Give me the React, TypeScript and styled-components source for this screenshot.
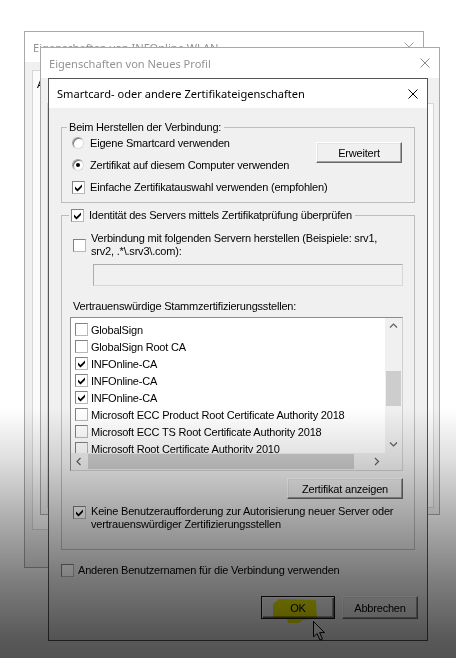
import React from "react";
import styled, { createGlobalStyle, css } from "styled-components";

const GlobalStyle = createGlobalStyle`
  html, body { margin: 0; padding: 0; background: #fff; }
  body {
    font-family: "Liberation Sans", Arial, sans-serif;
    font-size: 11px;
    letter-spacing: -0.2px;
    color: #000;
  }
`;

const Desktop = styled.div`
  position: relative;
  width: 456px;
  height: 658px;
  overflow: hidden;
  background: #fff;
`;

const Window = styled.div<{ $x: number; $y: number; $w: number; $h: number; $active?: boolean }>`
  position: absolute;
  left: ${(p) => p.$x}px;
  top: ${(p) => p.$y}px;
  width: ${(p) => p.$w}px;
  height: ${(p) => p.$h}px;
  box-sizing: border-box;
  border: 1px solid ${(p) => (p.$active ? "#555555" : "#a9a9a9")};
  background: #f0f0f0;
  display: flex;
  flex-direction: column;
`;

const TitleBar = styled.div<{ $h: number }>`
  flex: none;
  height: ${(p) => p.$h}px;
  background: #fff;
  display: flex;
  align-items: center;
  justify-content: space-between;
  padding: 0 9px 0 8px;
`;

const TitleText = styled.span<{ $inactive?: boolean }>`
  font-family: "Noto Sans", "Open Sans", sans-serif;
  font-size: 11.1px;
  letter-spacing: 0;
  white-space: nowrap;
  color: ${(p) => (p.$inactive ? "#939393" : "#000")};
`;

const WindowBody = styled.div<{ $pad: string }>`
  flex: 1;
  display: flex;
  flex-direction: column;
  padding: ${(p) => p.$pad};
  min-height: 0;
`;

const TabPanel = styled.div`
  flex: 1;
  background: #fbfbfb;
  border: 1px solid #d6d6d6;
  padding: 7px 4px;
`;

const TabCaption = styled.div`
  line-height: 13px;
`;

const Group = styled.fieldset<{ $mt?: number }>`
  margin: ${(p) => p.$mt ?? 0}px 0 0 0;
  padding: 0;
  border: 1px solid #bcbcbc;
  min-width: 0;
`;

const Legend = styled.legend<{ $ml: number }>`
  margin-left: ${(p) => p.$ml}px;
  padding: 0 3px 0 2px;
  line-height: 13px;
  display: flex;
  align-items: center;
  gap: 5px;
`;

const GroupBody = styled.div<{ $pad: string; $mt?: number }>`
  display: flex;
  flex-direction: column;
  padding: ${(p) => p.$pad};
  margin-top: ${(p) => p.$mt ?? 0}px;
`;

const ConnectGrid = styled.div`
  display: grid;
  grid-template-columns: 1fr auto;
  grid-template-rows: 22px 22px 22px;
`;

const ConnectButtonCell = styled.div`
  grid-column: 2;
  grid-row: 1 / span 2;
  padding-top: 10px;
`;

const FullRow = styled.div`
  grid-column: 1 / span 2;
  grid-row: 3;
  display: flex;
`;

const EndRow = styled.div`
  display: flex;
  justify-content: flex-end;
`;

const OptionRow = styled.div<{ $h?: number; $mt?: number; $gap?: number; $top?: boolean }>`
  display: flex;
  align-items: ${(p) => (p.$top ? "flex-start" : "center")};
  gap: ${(p) => p.$gap ?? 6}px;
  ${(p) => p.$h && css`height: ${p.$h}px;`}
  margin-top: ${(p) => p.$mt ?? 0}px;
  line-height: 13px;
  white-space: nowrap;
`;

const MultiLine = styled.span`
  white-space: normal;
  line-height: 13px;
`;

const Box = styled.span<{ $mt?: number }>`
  flex: none;
  width: 13px;
  height: 13px;
  box-sizing: border-box;
  background: #fff;
  border: 1px solid #828282;
  border-right-color: #b8b8b8;
  border-bottom-color: #b8b8b8;
  display: inline-flex;
  align-items: center;
  justify-content: center;
  margin-top: ${(p) => p.$mt ?? 0}px;
`;

const Radio = styled.span<{ $on?: boolean }>`
  flex: none;
  width: 12px;
  height: 12px;
  box-sizing: border-box;
  border-radius: 50%;
  background: #fff;
  border: 1px solid #a2a2a2;
  border-right-color: #dcdcdc;
  border-bottom-color: #dcdcdc;
  box-shadow: inset 1px 1px 0 #7a7a7a;
  display: inline-flex;
  align-items: center;
  justify-content: center;
  ${(p) =>
    p.$on &&
    css`
      &::after {
        content: "";
        width: 4px;
        height: 4px;
        border-radius: 50%;
        background: #000;
      }
    `}
`;

const Button = styled.button<{ $w: number; $h: number; $mt?: number; $primary?: boolean }>`
  width: ${(p) => p.$w}px;
  height: ${(p) => p.$h}px;
  margin-top: ${(p) => p.$mt ?? 0}px;
  flex: none;
  box-sizing: border-box;
  padding: 0;
  font: inherit;
  letter-spacing: -0.2px;
  color: #000;
  background: #f0f0f0;
  border: 1px solid;
  border-color: #fff #696969 #696969 #fff;
  box-shadow: inset -1px -1px 0 #a0a0a0, inset 1px 1px 0 #e3e3e3;
  ${(p) =>
    p.$primary &&
    css`
      border-color: #151515;
      box-shadow: inset 1px 1px 0 #fff, inset -1px -1px 0 #696969, inset -2px -2px 0 #a0a0a0;
    `}
`;

const Field = styled.div`
  height: 22px;
  box-sizing: border-box;
  margin: 6px 0 0 20px;
  background: #f0f0f0;
  border: 1px solid #acacac;
  border-right-color: #d8d8d8;
  border-bottom-color: #d8d8d8;
`;

const Label = styled.div<{ $mt: number }>`
  margin-top: ${(p) => p.$mt}px;
  line-height: 13px;
`;

const ListBox = styled.div`
  margin: 4px 0 0 -3px;
  height: 154px;
  box-sizing: border-box;
  border: 1px solid #8c8c8c;
  border-right-color: #cfcfcf;
  border-bottom-color: #cfcfcf;
  background: #fff;
  display: grid;
  grid-template-columns: 1fr 17px;
  grid-template-rows: 1fr 17px;
`;

const Items = styled.div`
  overflow: hidden;
  padding-top: 3px;
  display: flex;
  flex-direction: column;
`;

const Item = styled.div`
  flex: none;
  height: 17px;
  display: flex;
  align-items: center;
  gap: 3px;
  padding-left: 4px;
  white-space: nowrap;
`;

const VScroll = styled.div`
  background: #f0f0f0;
  display: flex;
  flex-direction: column;
`;

const HScroll = styled.div`
  background: #f0f0f0;
  display: flex;
`;

const ArrowCell = styled.div`
  flex: none;
  width: 17px;
  height: 17px;
  display: flex;
  align-items: center;
  justify-content: center;
`;

const VTrack = styled.div`
  flex: 1;
  padding-top: 36px;
`;

const VThumb = styled.div`
  margin: 0 1px;
  height: 35px;
  background: #cdcdcd;
`;

const HTrack = styled.div`
  flex: 1;
  display: flex;
  align-items: stretch;
  padding: 1px 0;
`;

const HThumb = styled.div`
  width: 266px;
  background: #cdcdcd;
`;

const Corner = styled.div`
  background: #f0f0f0;
`;

const ButtonRow = styled.div`
  display: flex;
  justify-content: flex-end;
  gap: 7px;
  margin: 19px -3px 0 0;
`;

const Marker = styled.svg`
  position: absolute;
  left: 270px;
  top: 597px;
  mix-blend-mode: multiply;
`;

const Pointer = styled.svg`
  position: absolute;
  left: 312px;
  top: 620px;
`;

const Shade = styled.div`
  position: absolute;
  inset: 0;
  pointer-events: none;
  background: linear-gradient(
    to bottom,
    rgba(0, 0, 0, 0) 62%,
    rgba(0, 0, 0, 0.13) 70%,
    rgba(0, 0, 0, 0.32) 79%,
    rgba(0, 0, 0, 0.5) 88%,
    rgba(0, 0, 0, 0.65) 97%,
    rgba(0, 0, 0, 0.68) 100%
  );
`;

const CloseIcon = ({ color }: { color: string }) => (
  <svg width="10" height="10" viewBox="0 0 10 10">
    <path d="M0.5 0.5 L9.5 9.5 M9.5 0.5 L0.5 9.5" stroke={color} strokeWidth="1" fill="none" />
  </svg>
);

const Check = () => (
  <svg width="9" height="9" viewBox="0 0 9 9">
    <polygon points="1,3.5 3.5,6 8,1.5 8,4 3.5,8.5 1,6" fill="#000" />
  </svg>
);

const Chevron = ({ dir }: { dir: "up" | "down" | "left" | "right" }) => {
  const d = {
    up: "M1 5.5 L4.5 2 L8 5.5",
    down: "M1 2.5 L4.5 6 L8 2.5",
    left: "M5.5 1 L2 4.5 L5.5 8",
    right: "M3 1 L6.5 4.5 L3 8",
  }[dir];
  return (
    <svg width="9" height="9" viewBox="0 0 9 9">
      <path d={d} stroke="#606060" strokeWidth="1.2" fill="none" />
    </svg>
  );
};

const certs: { name: string; on: boolean }[] = [
  { name: "GlobalSign", on: false },
  { name: "GlobalSign Root CA", on: false },
  { name: "INFOnline-CA", on: true },
  { name: "INFOnline-CA", on: true },
  { name: "INFOnline-CA", on: true },
  { name: "Microsoft ECC Product Root Certificate Authority 2018", on: false },
  { name: "Microsoft ECC TS Root Certificate Authority 2018", on: false },
  { name: "Microsoft Root Certificate Authority 2010", on: false },
];

export default function App() {
  return (
    <>
      <GlobalStyle />
      <Desktop>
        <Window $x={24} $y={31} $w={400} $h={537}>
          <TitleBar $h={30}>
            <TitleText $inactive>Eigenschaften von INFOnline WLAN</TitleText>
            <CloseIcon color="#a0a0a0" />
          </TitleBar>
          <WindowBody $pad="8px 8px 37px 7px">
            <TabPanel>
              <TabCaption>A</TabCaption>
            </TabPanel>
          </WindowBody>
        </Window>

        <Window $x={40} $y={47} $w={400} $h={468}>
          <TitleBar $h={30}>
            <TitleText $inactive>Eigenschaften von Neues Profil</TitleText>
            <CloseIcon color="#8a8a8a" />
          </TitleBar>
          <WindowBody $pad="25px 5px 6px 6px">
            <TabPanel />
          </WindowBody>
        </Window>

        <Window $x={48} $y={78} $w={380} $h={563} $active>
          <TitleBar $h={29}>
            <TitleText>Smartcard- oder andere Zertifikateigenschaften</TitleText>
            <CloseIcon color="#000" />
          </TitleBar>
          <WindowBody $pad="13px 12px 0 12px">
            <Group>
              <Legend $ml={5}>Beim Herstellen der Verbindung:</Legend>
              <GroupBody $pad="0 12px 4px 10px" $mt={-2}>
                <ConnectGrid>
                  <OptionRow>
                    <Radio />
                    <span>Eigene Smartcard verwenden</span>
                  </OptionRow>
                  <OptionRow>
                    <Radio $on />
                    <span>Zertifikat auf diesem Computer verwenden</span>
                  </OptionRow>
                  <ConnectButtonCell>
                    <Button $w={86} $h={21}>
                      Erweitert
                    </Button>
                  </ConnectButtonCell>
                  <FullRow>
                    <OptionRow $gap={5}>
                      <Box>
                        <Check />
                      </Box>
                      <span>Einfache Zertifikatauswahl verwenden (empfohlen)</span>
                    </OptionRow>
                  </FullRow>
                </ConnectGrid>
              </GroupBody>
            </Group>

            <Group $mt={6}>
              <Legend $ml={7}>
                <Box>
                  <Check />
                </Box>
                <span>Identität des Servers mittels Zertifikatprüfung überprüfen</span>
              </Legend>
              <GroupBody $pad="0 11px 18px 11px">
                <OptionRow $mt={10} $gap={5}>
                  <Box />
                  <MultiLine>
                    Verbindung mit folgenden Servern herstellen (Beispiele: srv1,
                    <br />
                    srv2, .*\.srv3\.com):
                  </MultiLine>
                </OptionRow>
                <Field />
                <Label $mt={14}>Vertrauenswürdige Stammzertifizierungsstellen:</Label>
                <ListBox>
                  <Items>
                    {certs.map((c, i) => (
                      <Item key={i}>
                        <Box>{c.on && <Check />}</Box>
                        <span>{c.name}</span>
                      </Item>
                    ))}
                  </Items>
                  <VScroll>
                    <ArrowCell>
                      <Chevron dir="up" />
                    </ArrowCell>
                    <VTrack>
                      <VThumb />
                    </VTrack>
                    <ArrowCell>
                      <Chevron dir="down" />
                    </ArrowCell>
                  </VScroll>
                  <HScroll>
                    <ArrowCell>
                      <Chevron dir="left" />
                    </ArrowCell>
                    <HTrack>
                      <HThumb />
                    </HTrack>
                    <ArrowCell>
                      <Chevron dir="right" />
                    </ArrowCell>
                  </HScroll>
                  <Corner />
                </ListBox>
                <EndRow>
                  <Button $w={116} $h={21} $mt={7}>
                    Zertifikat anzeigen
                  </Button>
                </EndRow>
                <OptionRow $mt={6} $gap={5} $top>
                  <Box $mt={1}>
                    <Check />
                  </Box>
                  <MultiLine>
                    Keine Benutzeraufforderung zur Autorisierung neuer Server oder
                    <br />
                    vertrauenswürdiger Zertifizierungsstellen
                  </MultiLine>
                </OptionRow>
              </GroupBody>
            </Group>

            <OptionRow $mt={14} $gap={4}>
              <Box />
              <span>Anderen Benutzernamen für die Verbindung verwenden</span>
            </OptionRow>

            <ButtonRow>
              <Button $w={74} $h={23} $primary>
                OK
              </Button>
              <Button $w={76} $h={23}>
                Abbrechen
              </Button>
            </ButtonRow>
          </WindowBody>
        </Window>

        <Marker width="50" height="30" viewBox="0 0 50 30">
          <polygon points="3,7 9,2 46,3 47,22 33,23 29,26 18,26 17,22 3,22" fill="#f2f200" />
        </Marker>

        <Pointer width="14" height="22" viewBox="0 0 14 22">
          <path
            d="M1.5 1.5 L1.5 17 L5 13.5 L8 20 L10.5 19 L7.6 12.6 L12.5 12.6 Z"
            fill="#fff"
            stroke="#000"
            strokeWidth="1"
          />
        </Pointer>

        <Shade />
      </Desktop>
    </>
  );
}
